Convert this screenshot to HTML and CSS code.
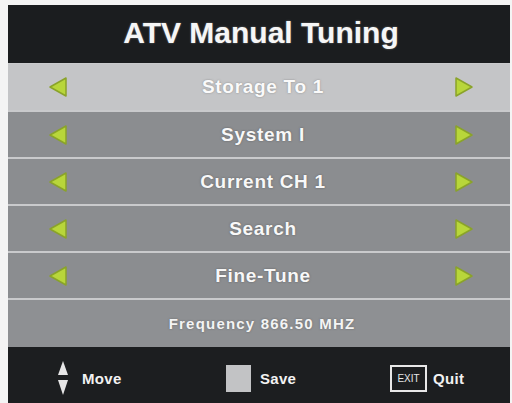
FILE: index.html
```html
<!DOCTYPE html>
<html>
<head>
<meta charset="utf-8">
<link rel="stylesheet" href="styles.css">
</head>
<body>
<div class="panel">
  <div class="header">ATV Manual Tuning</div>
  <div class="row active">
    <svg class="arr" viewBox="0 0 20 22"><polygon points="18,2 18,20 2,11" /></svg>
    <span class="label">Storage To 1</span>
    <svg class="arr" viewBox="0 0 20 22"><polygon points="2,2 2,20 18,11" /></svg>
  </div>
  <div class="row">
    <svg class="arr" viewBox="0 0 20 22"><polygon points="18,2 18,20 2,11" /></svg>
    <span class="label">System I</span>
    <svg class="arr" viewBox="0 0 20 22"><polygon points="2,2 2,20 18,11" /></svg>
  </div>
  <div class="row">
    <svg class="arr" viewBox="0 0 20 22"><polygon points="18,2 18,20 2,11" /></svg>
    <span class="label">Current CH 1</span>
    <svg class="arr" viewBox="0 0 20 22"><polygon points="2,2 2,20 18,11" /></svg>
  </div>
  <div class="row">
    <svg class="arr" viewBox="0 0 20 22"><polygon points="18,2 18,20 2,11" /></svg>
    <span class="label">Search</span>
    <svg class="arr" viewBox="0 0 20 22"><polygon points="2,2 2,20 18,11" /></svg>
  </div>
  <div class="row">
    <svg class="arr" viewBox="0 0 20 22"><polygon points="18,2 18,20 2,11" /></svg>
    <span class="label">Fine-Tune</span>
    <svg class="arr" viewBox="0 0 20 22"><polygon points="2,2 2,20 18,11" /></svg>
  </div>
  <div class="row freq"><span class="freq-label">Frequency 866.50 MHZ</span></div>
  <div class="footer">
    <div class="fitem move">
      <svg class="updown" viewBox="0 0 12 36"><polygon points="6,1 11,15 1,15" /><polygon points="1,20 11,20 6,35" /></svg>
      <span>Move</span>
    </div>
    <div class="fitem save">
      <span class="savebox"></span>
      <span>Save</span>
    </div>
    <div class="fitem quit">
      <span class="exitbox">EXIT</span>
      <span>Quit</span>
    </div>
  </div>
</div>
</body>
</html>
```
FILE: styles.css
```css
html, body { margin: 0; padding: 0; background: #f4f4f4; }
body { padding: 5px 2px 0 8px; font-family: "Liberation Sans", Arial, sans-serif; }
.panel { width: 502px; display: flex; flex-direction: column; background: #c9cacc; }
.header {
  height: 58px; background: #1b1d1f; color: #f6f6f6;
  font-weight: bold; font-size: 30px; display: flex; align-items: center; justify-content: center;
  padding-left: 4px; padding-bottom: 2px; box-sizing: border-box;
  text-shadow: 0 0 2px rgba(255,255,255,0.4);
  margin-bottom: 1px;
}
.row {
  height: 45px; background: #8b8d90; display: flex; align-items: center;
  padding: 0 36px 0 40px; margin-bottom: 2px;
}
.row.active { background: #c4c5c7; height: 46px; }
.arr { width: 20px; height: 22px; flex: none; }
.arr polygon { fill: #b8d63a; stroke: #8aa32a; stroke-width: 1.5; stroke-linejoin: round; }
.label {
  flex: 1; text-align: center; color: #f8f8f8; font-weight: bold; font-size: 19px;
  letter-spacing: 0.7px; padding-left: 4px;
  text-shadow: 0 0 2px rgba(60,60,60,0.6);
}
.row.active .label { color: #fafafa; text-shadow: 0 0 2px rgba(110,110,110,0.7); }
.row.freq { justify-content: center; height: 47px; padding: 0 0 0 6px; margin-bottom: 0; background: #8e9093; }
.freq-label { color: #f4f4f4; font-weight: bold; font-size: 15px; letter-spacing: 1.2px; text-shadow: 0 0 2px rgba(60,60,60,0.5); }
.footer {
  height: 58px; background: #1c1e20; display: flex; align-items: center;
  padding-left: 49px; padding-top: 4px; box-sizing: border-box;
  color: #f2f2f2; font-weight: bold; font-size: 15px; letter-spacing: 0.3px;
}
.fitem { display: flex; align-items: center; }
.move { width: 169px; gap: 13px; }
.save { width: 164px; gap: 9px; }
.quit { gap: 6px; }
.updown { width: 12px; height: 36px; }
.updown polygon { fill: #e6e6e6; }
.savebox { width: 25px; height: 27px; background: #c2c3c5; display: block; }
.exitbox {
  width: 33px; height: 23px; border: 2px solid #e8e8e8; box-sizing: content-box;
  display: flex; align-items: center; justify-content: center; letter-spacing: 0;
  font-size: 10px; font-weight: normal; color: #e8e8e8; font-family: "Liberation Sans Narrow", "Liberation Sans", sans-serif;
}
```
